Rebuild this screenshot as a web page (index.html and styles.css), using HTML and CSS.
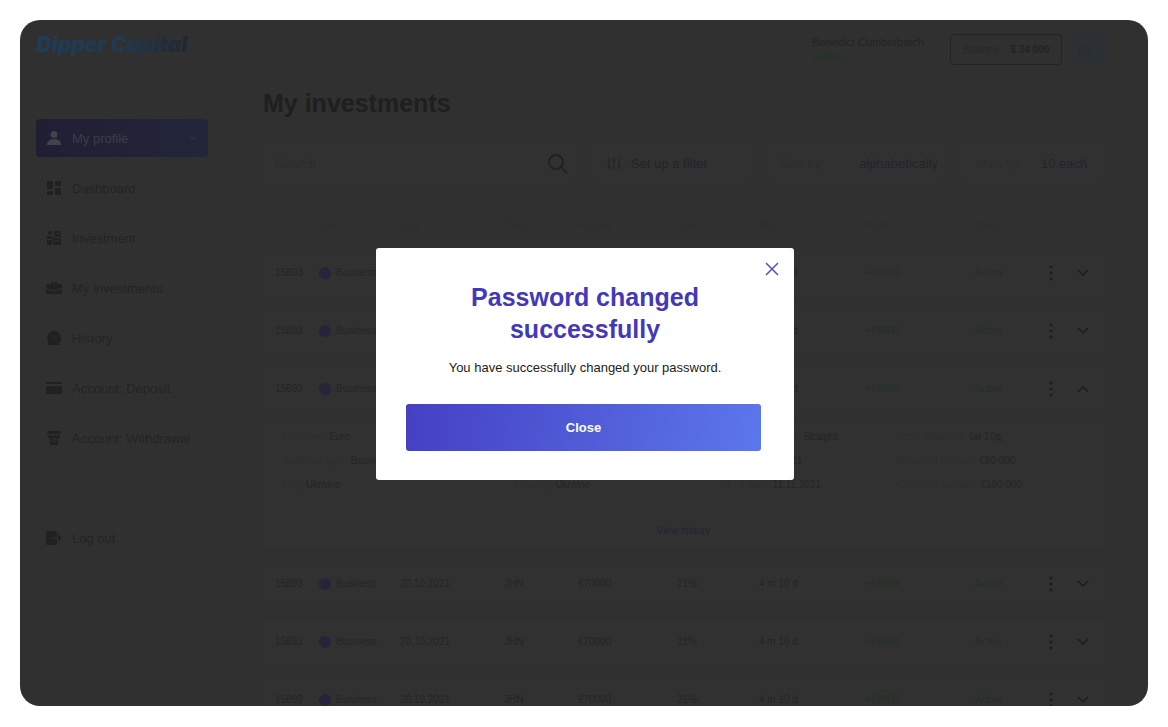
FILE: index.html
```html
<!DOCTYPE html>
<html lang="en">
  <head>
    <meta charset="UTF-8" />
    <meta name="viewport" content="width=device-width, initial-scale=1.0" />
    <title>Dipper Capital - My investments</title>
    <link rel="stylesheet" href="styles.css">
  </head>

  <body>
    <div class="app">
      <!-- Sidebar -->
      <aside class="sidebar">
        <a href="#" class="logo">Dipper Capital</a>
        <nav class="menu">
          <a href="#" class="menu-item active">
            <svg viewBox="0 0 16 16"><circle cx="8" cy="4.500" r="3.500" /><path d="M1 15c0-4 3-6 7-6s7 2 7 6z" /></svg>
            My profile
            <svg class="menu-arrow" viewBox="0 0 10 10"><path d="M2 4l3 2 3-2" /></svg>
          </a>
          <a href="#" class="menu-item">
            <svg viewBox="0 0 16 16"><rect x="1" y="1" width="6" height="8" rx="1" /><rect x="9" y="1" width="6" height="5" rx="1" /><rect x="1" y="11" width="6" height="4" rx="1" /><rect x="9" y="8" width="6" height="7" rx="1" /></svg>
            Dashboard
          </a>
          <a href="#" class="menu-item">
            <svg viewBox="0 0 16 16"><circle cx="4" cy="3" r="2" /><path d="M1 6h6v3H1zM8 1h7v6H8zM1 10h5v5H1zM7 8h8v7H7z" /><path class="cut" d="M9 5l2-2 1 1 2-2M8 12l2-2 2 2 2-2" /></svg>
            Investment
          </a>
          <a href="#" class="menu-item">
            <svg viewBox="0 0 16 16"><path d="M5 4V2h6v2h4q1 0 1 1v3l-6 2H6L0 8V5q0-1 1-1zM7 4h2V3H7zM0 9l6 2h4l6-2v4q0 1-1 1H1q-1 0-1-1z" /></svg>
            My investments
          </a>
          <a href="#" class="menu-item">
            <svg viewBox="0 0 16 16"><path d="M8 1a7 7 0 0 1 7 7l1 2-2 1v4H2v-4A7 7 0 0 1 8 1z" /><path class="cut" d="M8 5v4" /></svg>
            History
          </a>
          <a href="#" class="menu-item">
            <svg viewBox="0 0 16 16"><path d="M1 2h14q1 0 1 1v1H0V3q0-1 1-1zM0 6h16v7q0 1-1 1H1q-1 0-1-1z" /></svg>
            Account: Deposit
          </a>
          <a href="#" class="menu-item">
            <svg viewBox="0 0 16 16"><path d="M1 1h14v3H1zM2 5h12v3h-2v7H4V8H2z" /><circle class="cut" cx="8" cy="10" r="2" /></svg>
            Account: Withdrawal
          </a>
          <a href="#" class="menu-item logout">
            <svg viewBox="0 0 16 16"><path d="M1 1h8q2 0 2 2v10q0 2-2 2H1q-1 0-1-1V2q0-1 1-1zM12 4l4 4-4 4z" /><path class="cut" d="M5 8h6" /></svg>
            Log out
          </a>
        </nav>
      </aside>

      <!-- Page content -->
      <main class="content">
        <header class="topbar">
          <div class="user">
            <div class="user-name">Benedict Cumberbatch</div>
            <div class="user-status">Verified</div>
          </div>
          <button class="balance">Balance: <b>$ 34 000</b></button>
          <button class="lang">En</button>
        </header>

        <section class="investments">
          <h1>My investments</h1>

          <form class="toolbar">
            <label class="tool search">
              <input type="text" placeholder="Search" aria-label="Search" />
              <svg viewBox="0 0 20 20"><circle cx="8" cy="8" r="7" /><path d="M13 13l6 6" /></svg>
            </label>
            <button type="button" class="tool filter">
              <svg viewBox="0 0 14 14"><path d="M2 1v8M2 12v1M7 1v2M7 6v7M12 1v8M12 12v1" /><circle cx="2" cy="10" r="1" /><circle cx="7" cy="4" r="1" /><circle cx="12" cy="10" r="1" /></svg>
              Set up a filter
            </button>
            <label class="tool sort">
              <span>Sort by:</span>
              <select><option>alphabetically</option></select>
            </label>
            <label class="tool show">
              <span>Show by:</span>
              <select><option>10 each</option></select>
            </label>
          </form>

          <table class="deals">
            <colgroup>
              <col class="c-id" /><col class="c-type" /><col class="c-date" /><col class="c-code" /><col class="c-sum" /><col class="c-rate" />
              <col class="c-term" /><col class="c-profit" /><col class="c-status" /><col class="c-more" /><col class="c-open" />
            </colgroup>
            <thead>
              <tr><th>ID</th><th>Type</th><th>Date</th><th>Code</th><th>Amount</th><th>Rate</th><th>Term</th><th>Profit</th><th>Status</th><th></th><th></th></tr>
            </thead>
            <tbody>
              <tr>
                <td>15893</td><td><span class="type">Business</span></td><td>20.10.2021</td><td>JHN</td><td>€70000</td><td>21%</td><td>4 m 10 d</td>
                <td class="green">+€8000</td><td class="green">Active</td>
                <td><button class="more" aria-label="More"></button></td>
                <td><button class="open" aria-label="Open"><svg viewBox="0 0 12 8"><path d="M1 1l5 5 5-5" /></svg></button></td>
              </tr>
              <tr>
                <td>15893</td><td><span class="type">Business</span></td><td>20.10.2021</td><td>JHN</td><td>€70000</td><td>21%</td><td>4 m 10 d</td>
                <td class="green">+€8000</td><td class="green">Active</td>
                <td><button class="more" aria-label="More"></button></td>
                <td><button class="open" aria-label="Open"><svg viewBox="0 0 12 8"><path d="M1 1l5 5 5-5" /></svg></button></td>
              </tr>
              <tr>
                <td>15893</td><td><span class="type">Business</span></td><td>20.10.2021</td><td>JHN</td><td>€70000</td><td>21%</td><td>4 m 10 d</td>
                <td class="green">+€8000</td><td class="green">Active</td>
                <td><button class="more" aria-label="More"></button></td>
                <td><button class="open" aria-label="Close"><svg viewBox="0 0 12 8"><path d="M1 7l5-5 5 5" /></svg></button></td>
              </tr>
              <!-- Expanded row -->
              <tr class="details">
                <td colspan="11">
                  <div class="details-grid">
                    <div><span>Currency:</span> Euro</div>
                    <div></div>
                    <div><span>Investment type:</span> Straight</div>
                    <div><span>Time remained:</span> 6м 10д</div>
                    <div><span>Business type:</span> Business</div>
                    <div></div>
                    <div><span>Start:</span> 11.11.2021</div>
                    <div><span>Required amount:</span> €80 000</div>
                    <div><span>City:</span> Ukraine</div>
                    <div><span>Country:</span> Ukraine</div>
                    <div><span>End date:</span> 11.11.2021</div>
                    <div><span>Collected amount:</span> €180 000</div>
                  </div>
                  <a href="#" class="history-link">View history</a>
                </td>
              </tr>
              <tr>
                <td>15893</td><td><span class="type">Business</span></td><td>20.10.2021</td><td>JHN</td><td>€70000</td><td>21%</td><td>4 m 10 d</td>
                <td class="green">+€8000</td><td class="green">Active</td>
                <td><button class="more" aria-label="More"></button></td>
                <td><button class="open" aria-label="Open"><svg viewBox="0 0 12 8"><path d="M1 1l5 5 5-5" /></svg></button></td>
              </tr>
              <tr>
                <td>15893</td><td><span class="type">Business</span></td><td>20.10.2021</td><td>JHN</td><td>€70000</td><td>21%</td><td>4 m 10 d</td>
                <td class="green">+€8000</td><td class="green">Active</td>
                <td><button class="more" aria-label="More"></button></td>
                <td><button class="open" aria-label="Open"><svg viewBox="0 0 12 8"><path d="M1 1l5 5 5-5" /></svg></button></td>
              </tr>
              <tr>
                <td>15893</td><td><span class="type">Business</span></td><td>20.10.2021</td><td>JHN</td><td>€70000</td><td>21%</td><td>4 m 10 d</td>
                <td class="green">+€8000</td><td class="green">Active</td>
                <td><button class="more" aria-label="More"></button></td>
                <td><button class="open" aria-label="Open"><svg viewBox="0 0 12 8"><path d="M1 1l5 5 5-5" /></svg></button></td>
              </tr>
            </tbody>
          </table>
        </section>
      </main>

      <!-- Modal -->
      <div class="overlay">
        <div class="modal" role="dialog" aria-labelledby="modalTitle">
          <button class="modal-x" aria-label="Close window">
            <svg viewBox="0 0 14 14"><path d="M1 1l12 12M13 1L1 13" /></svg>
          </button>
          <h2 id="modalTitle">Password changed successfully</h2>
          <p>You have successfully changed your password.</p>
          <button class="modal-btn">Close</button>
        </div>
      </div>
    </div>
  </body>
</html>
```
FILE: styles.css
```css
* {
  box-sizing: border-box;
}

body {
  margin: 0;
  padding: 20px;
  background: #fff;
  font-family: "Liberation Sans", Arial, sans-serif;
  font-size: 13px;
  color: #242424;
}

button,
input,
select {
  font: inherit;
  color: inherit;
  background: none;
  border: none;
  padding: 0;
  margin: 0;
}

a {
  color: inherit;
  text-decoration: none;
}

.app {
  position: relative;
  display: flex;
  height: calc(100vh - 41px);
  overflow: hidden;
  background: #303030;
  border-radius: 20px;
}

/* Sidebar */
.sidebar {
  flex: 0 0 204px;
  padding: 12px 16px;
}

.logo {
  display: block;
  height: 26px;
  line-height: 26px;
  font-family: Inter, sans-serif;
  font-size: 21px;
  font-weight: 900;
  font-style: italic;
  white-space: nowrap;
  color: transparent;
  background: linear-gradient(90deg, #1f3d58, #1f3a52 50%, #1f262d 92%);
  background-clip: text;
  -webkit-background-clip: text;
}

.menu {
  display: flex;
  flex-direction: column;
  gap: 12px;
  margin-top: 61px;
}

.menu-item {
  display: flex;
  align-items: center;
  gap: 10px;
  height: 38px;
  padding: 0 10px;
  border-radius: 4px;
  white-space: nowrap;
}

.menu-item svg {
  width: 16px;
  height: 16px;
  fill: #212121;
}

.menu-item .cut {
  fill: none;
  stroke: #303030;
}

.menu-item.active {
  color: #3c3c49;
  background: linear-gradient(90deg, #201e33, #23263a);
}

.menu-item.active svg {
  fill: #42424b;
}

.menu-item .menu-arrow {
  width: 10px;
  height: 10px;
  margin-left: auto;
  stroke: #33334a;
}

.menu-item.active .menu-arrow {
  fill: none;
}

.logout {
  margin-top: 50px;
}

/* Content */
.content {
  flex: 1;
  min-width: 0;
  padding: 14px 40px 0 39px;
}

.topbar {
  display: flex;
  justify-content: flex-end;
  gap: 10px;
  height: 32px;
}

.user {
  margin-right: 16px;
  font-size: 11px;
  line-height: 16px;
}

.user-status {
  font-size: 10px;
  color: #203425;
}

.balance {
  width: 112px;
  height: 31px;
  border: 1px solid #232327;
  border-radius: 4px;
  font-size: 10px;
  color: #27272a;
}

.balance b {
  margin-left: 6px;
  color: #22222b;
}

.lang {
  width: 36px;
  height: 31px;
  padding-left: 6px;
  text-align: left;
  border-radius: 4px;
  font-size: 11px;
  color: #222c36;
  background: #2c3034;
}

.investments {
  margin-right: 4px;
}

h1 {
  margin: 21px 0 24px;
  font-size: 25px;
  line-height: 32px;
  color: #1f1f1f;
}

.toolbar {
  display: grid;
  grid-template-columns: 313fr 160fr 176fr 144fr;
  gap: 16px;
}

.tool {
  display: flex;
  align-items: center;
  min-width: 0;
  height: 41px;
  padding: 0 12px;
  border-radius: 4px;
  background: #313131;
  color: #24242c;
}

.tool svg {
  flex: none;
  fill: none;
  stroke: #222226;
}

.search {
  padding-right: 8px;
}

.search input {
  flex: 1;
  min-width: 0;
}

.search input::placeholder {
  color: #2c2c2c;
}

.search svg {
  width: 20px;
  height: 20px;
  stroke-width: 2;
}

.filter {
  gap: 10px;
  padding-left: 15px;
}

.filter svg {
  width: 14px;
  height: 14px;
}

.tool span {
  color: #2d2d2d;
}

.tool select {
  margin-left: auto;
  appearance: none;
}

.sort {
  padding-right: 6px;
}

.show {
  padding: 0 16px;
}

.show span {
  font-size: 11px;
}

/* Table */
.deals {
  width: 100%;
  table-layout: fixed;
  border-spacing: 0 12px;
  margin-top: 17px;
  font-size: 10px;
  line-height: 12px;
  color: #252525;
}

.c-id { width: 56px; }
.c-type { width: 81px; }
.c-date { width: 104px; }
.c-code { width: 74px; }
.c-sum { width: 99px; }
.c-rate { width: 82px; }
.c-term { width: 106px; }
.c-profit { width: 110px; }
.c-status { width: 72px; }
.c-more { width: 30px; }
.c-open { width: 27px; }

.deals th {
  height: 25px;
  padding: 0;
  text-align: left;
  font-weight: 400;
  color: #2e2e2e;
}

.deals td {
  height: 46px;
  padding: 0;
  background: #313131;
  white-space: nowrap;
}

.deals th:first-child,
.deals td:first-child {
  padding-left: 12px;
}

.deals .green {
  color: #233024;
}

.type {
  display: flex;
  align-items: center;
  gap: 5px;
}

.type::before {
  content: "";
  width: 12px;
  height: 12px;
  border-radius: 50%;
  background: #252438;
}

/* Three vertical dots */
.more {
  display: block;
  width: 8px;
  height: 18px;
  background: radial-gradient(circle, #1e1e1e 1px, transparent 2px) 0 0 / 8px 6px;
}

.open {
  display: block;
  width: 12px;
  height: 8px;
}

.open svg {
  display: block;
  fill: none;
  stroke: #1c1c1c;
  stroke-width: 1.5;
}

.deals .details td {
  height: 125px;
  padding: 1px 0 12px 20px;
  vertical-align: top;
}

.details-grid {
  display: grid;
  grid-template-columns: 232fr 212fr 170fr 207fr;
  line-height: 24px;
}

.details-grid span {
  color: #2e2e2e;
}

.history-link {
  display: block;
  margin: 28px 20px 0 0;
  text-align: center;
  color: #242438;
}

/* Modal */
.overlay {
  position: absolute;
  inset: 0;
  display: flex;
  align-items: center;
  justify-content: center;
  padding: 2px 0 0 2px;
}

.modal {
  position: relative;
  width: 418px;
  max-width: 100%;
  padding: 33px 30px 29px;
  background: #fff;
  border-radius: 3px;
  text-align: center;
}

.modal h2 {
  margin: 0;
  font-size: 25px;
  line-height: 32px;
  color: #4339b8;
}

.modal p {
  margin: 13px 0 26px;
  line-height: 20px;
  color: #1c1c1c;
}

.modal-btn {
  display: block;
  width: calc(100% - 3px);
  height: 47px;
  border-radius: 3px;
  font-weight: 700;
  color: #fff;
  background: linear-gradient(100deg, #4540c2, #5c77eb);
}

.modal-x {
  position: absolute;
  top: 14px;
  right: 15px;
  width: 14px;
  height: 14px;
}

.modal-x svg {
  display: block;
  fill: none;
  stroke: #4a50cf;
  stroke-width: 1.5;
}
```
